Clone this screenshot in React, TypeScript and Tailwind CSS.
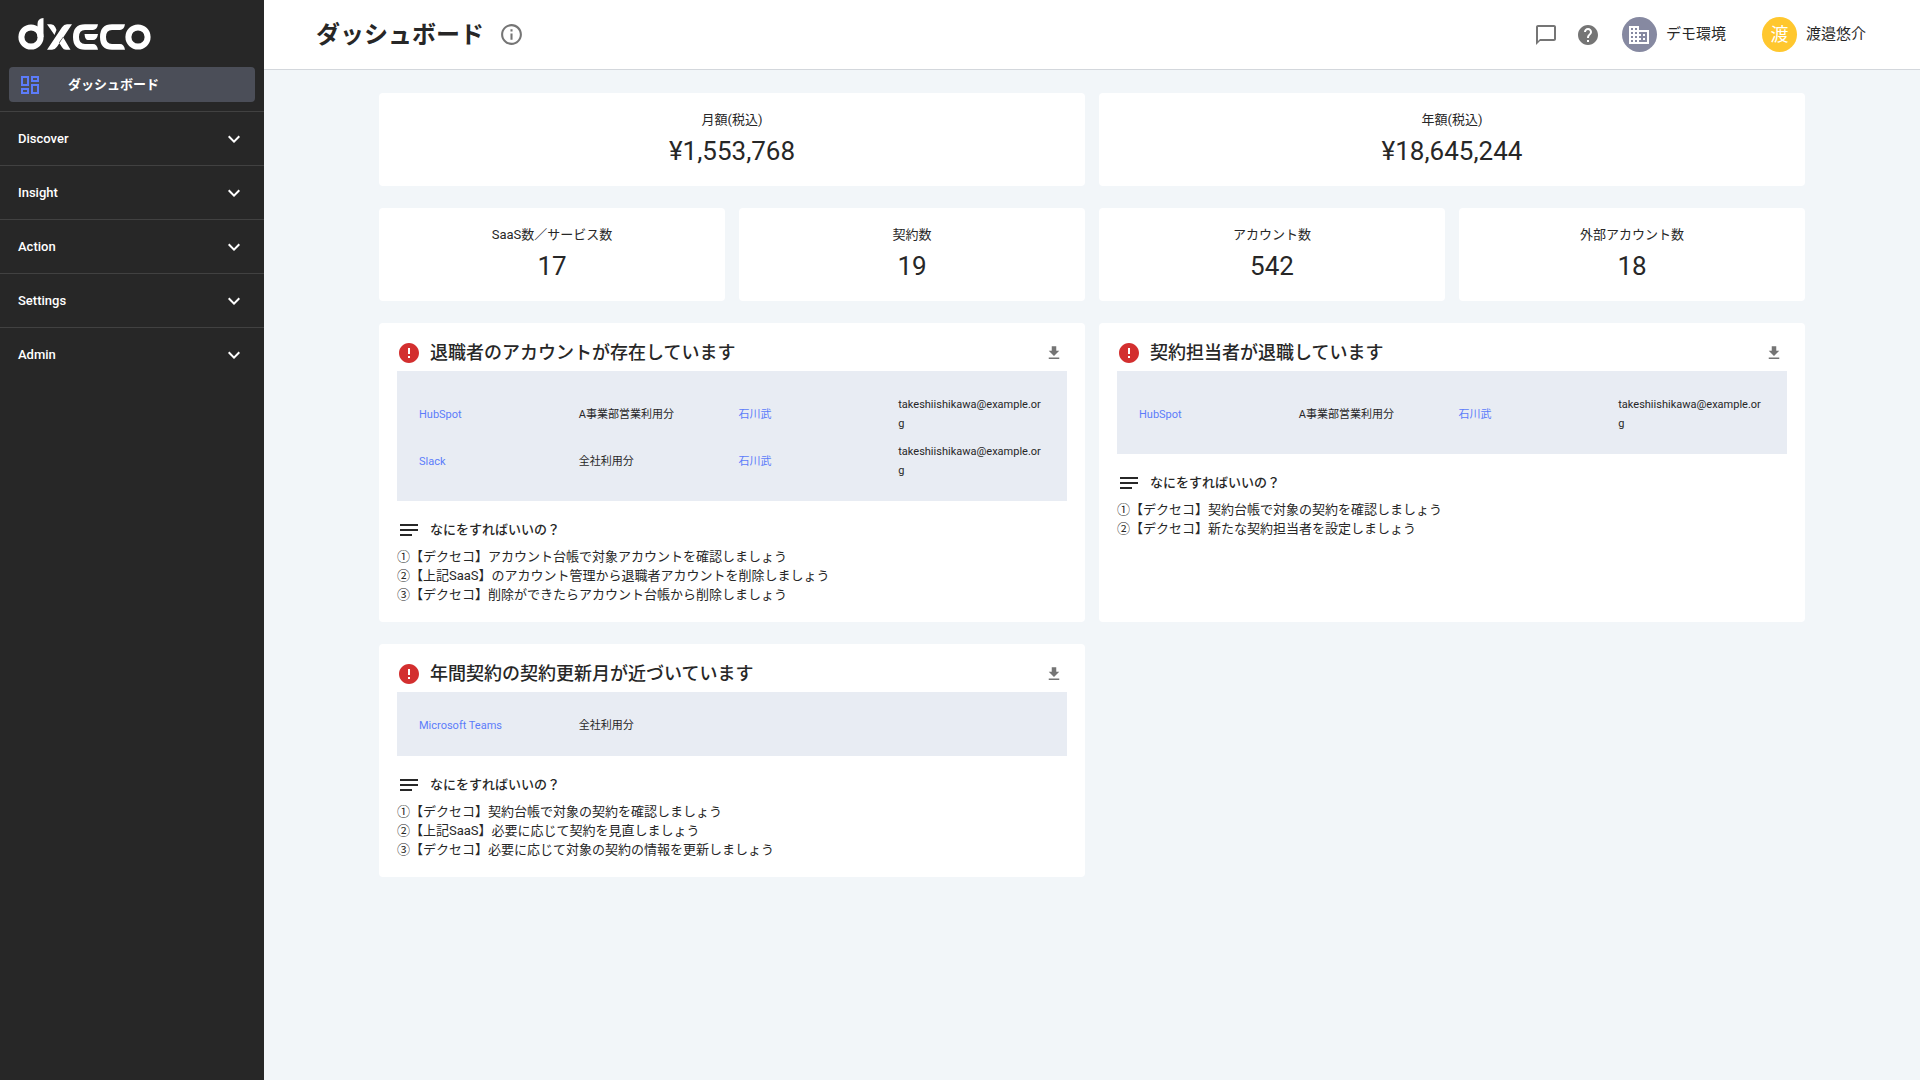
import {
  MdBusiness,
  MdChatBubbleOutline,
  MdError,
  MdExpandMore,
  MdGetApp,
  MdHelp,
  MdInfoOutline,
  MdNotes,
  MdOutlineDashboard,
} from 'react-icons/md';

interface Row {
  service: string;
  contract: string;
  person?: string;
  email?: string;
}

interface Alert {
  title: string;
  rows: Row[];
  steps: string[];
}

const menus = ['Discover', 'Insight', 'Action', 'Settings', 'Admin'];

const costs = [
  { label: '月額(税込)', value: '¥1,553,768' },
  { label: '年額(税込)', value: '¥18,645,244' },
];

const counts = [
  { label: 'SaaS数／サービス数', value: '17' },
  { label: '契約数', value: '19' },
  { label: 'アカウント数', value: '542' },
  { label: '外部アカウント数', value: '18' },
];

const alerts: Alert[] = [
  {
    title: '退職者のアカウントが存在しています',
    rows: [
      { service: 'HubSpot', contract: 'A事業部営業利用分', person: '石川武', email: 'takeshiishikawa@example.org' },
      { service: 'Slack', contract: '全社利用分', person: '石川武', email: 'takeshiishikawa@example.org' },
    ],
    steps: [
      '①【デクセコ】アカウント台帳で対象アカウントを確認しましょう',
      '②【上記SaaS】のアカウント管理から退職者アカウントを削除しましょう',
      '③【デクセコ】削除ができたらアカウント台帳から削除しましょう',
    ],
  },
  {
    title: '契約担当者が退職しています',
    rows: [
      { service: 'HubSpot', contract: 'A事業部営業利用分', person: '石川武', email: 'takeshiishikawa@example.org' },
    ],
    steps: [
      '①【デクセコ】契約台帳で対象の契約を確認しましょう',
      '②【デクセコ】新たな契約担当者を設定しましょう',
    ],
  },
  {
    title: '年間契約の契約更新月が近づいています',
    rows: [{ service: 'Microsoft Teams', contract: '全社利用分' }],
    steps: [
      '①【デクセコ】契約台帳で対象の契約を確認しましょう',
      '②【上記SaaS】必要に応じて契約を見直しましょう',
      '③【デクセコ】必要に応じて対象の契約の情報を更新しましょう',
    ],
  },
];

const Logo = () => (
  <svg
    role="img"
    aria-label="dxeco"
    viewBox="0 0 133 33"
    className="h-[33px] w-[133px]"
    fill="none"
    stroke="white"
    strokeWidth="6"
  >
    <circle cx="13" cy="19" r="9.6" />
    <path d="M19.5 19V6q0-5.500 6-6v19z" fill="white" stroke="none" />
    <path d="M29 6.300h4q3 0 4.200 2.700l1.300 3-2 5zM54 6.300h-5q-3 0-5 3L29 31.700h5q3 0 5-3zM41 24.500l4-5.500L52.500 31.700H48q-2.500 0-4-2.500z" fill="white" stroke="none" />
    <path d="M80 6.300q-1 5.700-5 5.700h-8q-6 0-6 7t6 7h8q4 0 5 5.700H67Q55 31.700 55 19T67 6.300zM66.500 16H80q-1 6-5 6h-5q-3 0-3.500-6z" fill="white" stroke="none" />
    <path d="M107 6.300q-1 5.700-5 5.700h-8q-6 0-6 7t6 7h8q4 0 5 5.700H94Q82 31.700 82 19T94 6.300z" fill="white" stroke="none" />
    <circle cx="120" cy="19" r="9.6" />
  </svg>
);

const Sidebar = () => (
  <aside className="w-[264px] shrink-0 bg-[#272727] text-[13px] font-medium text-white">
    <div className="px-[18px] pt-[18px] pb-4">
      <Logo />
    </div>
    <nav>
      <div className="px-[9px] pb-[9px]">
        <a href="#" className="flex h-[35px] items-center rounded bg-[#4b4e58] pl-[9px]">
          <MdOutlineDashboard className="size-6 text-[#5c7cfa]" />
          <span className="ml-[26px] font-bold">ダッシュボード</span>
        </a>
      </div>
      {menus.map((menu) => (
        <button
          key={menu}
          type="button"
          className="flex h-[54px] w-full items-center justify-between border-t border-[#414141] px-[18px]"
        >
          {menu}
          <MdExpandMore className="size-6" />
        </button>
      ))}
    </nav>
  </aside>
);

const Header = () => (
  <header className="flex h-[70px] items-center border-b border-[#d3d7dc] bg-white pr-[54px] pl-[52px]">
    <h1 className="text-2xl font-bold">ダッシュボード</h1>
    <button type="button" aria-label="情報" className="ml-[15px] text-[#757575]">
      <MdInfoOutline className="size-[25px]" />
    </button>
    <div className="ml-auto flex items-center text-[15px]">
      <button type="button" aria-label="チャット" className="text-[#757575]">
        <MdChatBubbleOutline className="size-6" />
      </button>
      <button type="button" aria-label="ヘルプ" className="ml-[18px] text-[#757575]">
        <MdHelp className="size-6" />
      </button>
      <button type="button" className="ml-[22px] flex items-center gap-[9px]">
        <span className="flex size-[35px] items-center justify-center rounded-full bg-[#8689a1] text-white">
          <MdBusiness className="size-6" />
        </span>
        デモ環境
      </button>
      <button type="button" className="ml-9 flex items-center gap-[9px]">
        <span className="flex size-[35px] items-center justify-center rounded-full bg-[#ffc72e] text-lg text-white">
          渡
        </span>
        渡邉悠介
      </button>
    </div>
  </header>
);

const StatCard = ({ label, value }: { label: string; value: string }) => (
  <div className="rounded bg-white pt-[17px] pb-[15px] text-center">
    <p className="text-[13px] leading-[19px]">{label}</p>
    <p className="mt-0.5 text-[26px] leading-10">{value}</p>
  </div>
);

const AlertCard = ({ title, rows, steps }: Alert) => (
  <section className="rounded bg-white px-[18px] pt-4 pb-[18px]">
    <div className="mb-[5px] flex h-[27px] items-center">
      <MdError className="size-6 text-[#d32f2f]" />
      <h2 className="ml-[9px] text-lg leading-6 font-medium">{title}</h2>
      <button type="button" aria-label="ダウンロード" className="mr-1 ml-auto text-[#757575]">
        <MdGetApp className="size-[18px]" />
      </button>
    </div>
    <div className="bg-[#e8ecf3] py-[18px] pr-[13px] pl-[18px]">
      <table className="w-full table-fixed text-left text-[11px] leading-[19px]">
        <tbody>
          {rows.map((row) => (
            <tr key={row.service}>
              <td className="pt-[6px] pr-[10px] pb-[3px] pl-1">
                <a href="#" className="text-[#5c7cfa]">{row.service}</a>
              </td>
              <td className="pt-[6px] pr-[10px] pb-[3px] pl-1">{row.contract}</td>
              <td className="pt-[6px] pr-[10px] pb-[3px] pl-1">
                {row.person && <a href="#" className="text-[#5c7cfa]">{row.person}</a>}
              </td>
              <td className="pt-[6px] pr-[10px] pb-[3px] pl-1 break-all">{row.email}</td>
            </tr>
          ))}
        </tbody>
      </table>
    </div>
    <div className="mt-[18px] flex h-[22px] items-center">
      <MdNotes className="size-6" />
      <h3 className="ml-[9px] text-[13px] font-medium">なにをすればいいの？</h3>
    </div>
    <ul className="mt-[6px] text-[13px] leading-[19px]">
      {steps.map((step) => (
        <li key={step}>{step}</li>
      ))}
    </ul>
  </section>
);

export default function App() {
  return (
    <div className="flex min-h-screen bg-[#f2f6f9] font-['Roboto','Noto_Sans_CJK_JP',sans-serif] text-[#272727]">
      <Sidebar />
      <div className="min-w-0 flex-1">
        <Header />
        <main className="space-y-[22px] px-[115px] pt-[23px]">
          <div className="grid grid-cols-2 gap-[14px]">
            {costs.map((cost) => (
              <StatCard key={cost.label} {...cost} />
            ))}
          </div>
          <div className="grid grid-cols-4 gap-[14px]">
            {counts.map((count) => (
              <StatCard key={count.label} {...count} />
            ))}
          </div>
          <div className="grid grid-cols-2 gap-x-[14px] gap-y-[22px]">
            {alerts.map((alert) => (
              <AlertCard key={alert.title} {...alert} />
            ))}
          </div>
        </main>
      </div>
    </div>
  );
}
